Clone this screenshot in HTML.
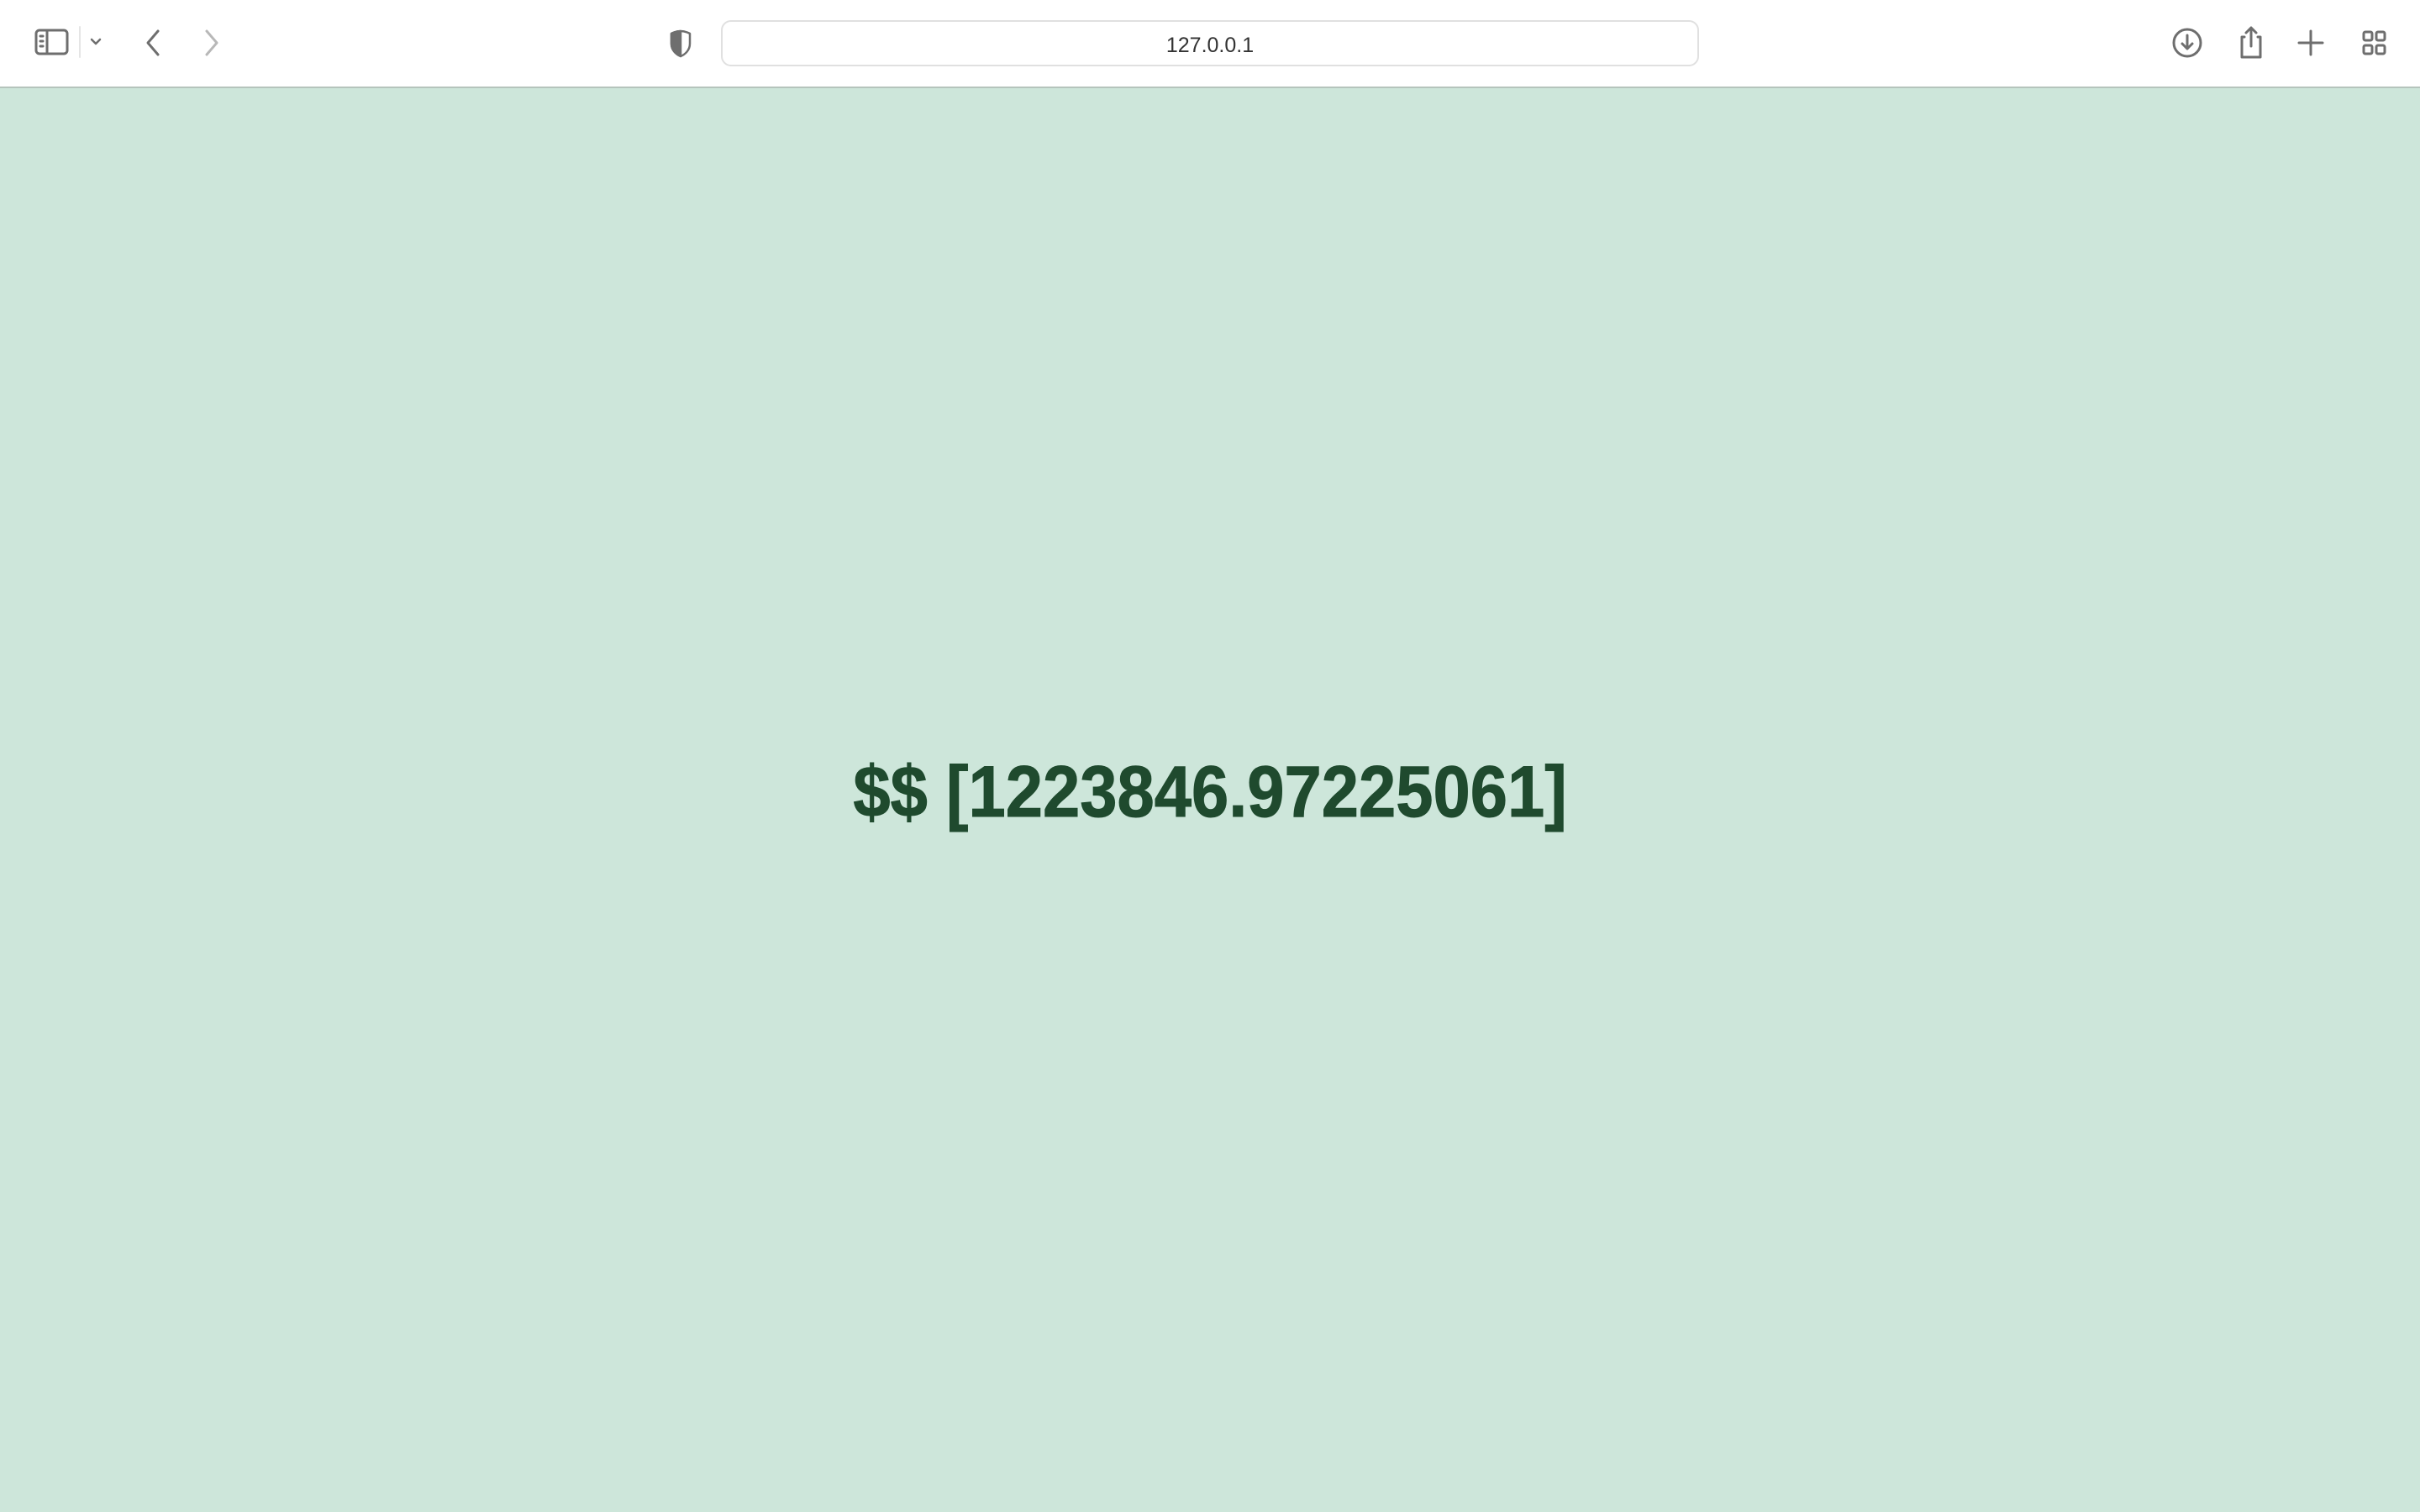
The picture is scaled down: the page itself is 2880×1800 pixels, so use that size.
<!DOCTYPE html>
<html><head><meta charset="utf-8"><style>
html,body{margin:0;padding:0;width:2880px;height:1800px;overflow:hidden;background:#cde6da;font-family:"Liberation Sans",Arial,sans-serif}
.bar{position:absolute;left:0;top:0;width:2880px;height:103px;background:#fff;border-bottom:2px solid #b5c4bc}
.url{position:absolute;left:858px;top:24px;width:1164px;height:55px;border:2px solid #e0e0e0;border-radius:12px;box-sizing:border-box;background:#fff}
.url span{position:absolute;left:0;right:0;top:14px;text-align:center;font-size:25px;color:#333}
svg{position:absolute}
.main{position:absolute;left:0;width:2880px;top:900px;text-align:center;font-weight:bold;font-size:86px;color:#1f4a2e;line-height:1}
.main span{display:inline-block;transform:scaleX(0.925);white-space:nowrap;-webkit-text-stroke:1px #1f4a2e}
</style></head><body>
<div class="bar">
<svg width="2880" height="103" style="left:0;top:0" fill="none" stroke="#6e6e6e" stroke-width="3" stroke-linecap="round" stroke-linejoin="round">
<rect x="43" y="36" width="37" height="28" rx="4"/><line x1="56" y1="36" x2="56" y2="64"/>
<line x1="48" y1="43" x2="51" y2="43"/><line x1="48" y1="49" x2="51" y2="49"/><line x1="48" y1="55" x2="51" y2="55"/>
<line x1="95" y1="32" x2="95" y2="68" stroke="#e5e5e5" stroke-width="2"/>
<path d="M109 47l5 5 5-5" stroke-width="2.5"/>
<path d="M188 37l-12 14 12 14"/>
<path d="M246 37l12 14-12 14" stroke="#b8b8b8"/>
<path d="M810 37c-6 0-11 3-11 3v12c0 8 6 13 11 15c5-2 11-7 11-15v-12s-5-3-11-3z" stroke-width="2.5"/>
<path d="M810 37c-6 0-11 3-11 3v12c0 8 6 13 11 15z" fill="#6e6e6e" stroke-width="2.5"/>
<path d="M2003 46a9 9 0 1 1-4-6" stroke-width="2.2"/><path d="M1996 36l4 4-4 3" stroke-width="2.2"/>
<circle cx="2603" cy="51" r="16"/><path d="M2603 42v16M2597 52l6 6 6-6"/>
<path d="M2671 44h-3v24h22v-24h-3"/><path d="M2679 33v22M2673 39l6-6 6 6"/>
<path d="M2750 37v28M2736 51h28"/>
<rect x="2813" y="38" width="10" height="10" rx="2"/><rect x="2828" y="38" width="10" height="10" rx="2"/><rect x="2813" y="54" width="10" height="10" rx="2"/><rect x="2828" y="54" width="10" height="10" rx="2"/>
</svg>
<div class="url"><span>127.0.0.1</span></div>
</div>
<div class="main"><span>$$ [1223846.97225061]</span></div>
</body></html>
